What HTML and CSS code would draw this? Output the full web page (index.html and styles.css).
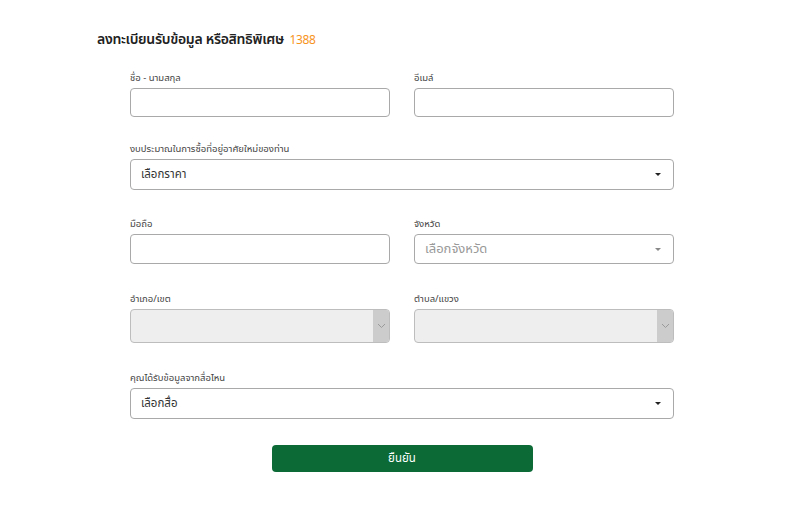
FILE: index.html
```html
<!DOCTYPE html>
<html lang="th">
<head>
<meta charset="utf-8">
<title>ลงทะเบียนรับข้อมูล</title>
<link rel="stylesheet" href="styles.css">
</head>
<body>
<div class="page">
  <h1 class="title">ลงทะเบียนรับข้อมูล หรือสิทธิพิเศษ <span class="hot">1388</span></h1>
  <form class="form">
    <div class="row two r1">
      <div class="field">
        <label class="lbl">ชื่อ - นามสกุล</label>
        <div class="ctl h29"></div>
      </div>
      <div class="field">
        <label class="lbl">อีเมล์</label>
        <div class="ctl h29"></div>
      </div>
    </div>
    <div class="row r2">
      <div class="field">
        <label class="lbl">งบประมาณในการซื้อที่อยู่อาศัยใหม่ของท่าน</label>
        <div class="ctl sel h31"><span class="val">เลือกราคา</span><span class="caret"></span></div>
      </div>
    </div>
    <div class="row two r3">
      <div class="field">
        <label class="lbl">มือถือ</label>
        <div class="ctl h30"></div>
      </div>
      <div class="field">
        <label class="lbl">จังหวัด</label>
        <div class="ctl sel h30"><span class="val ph">เลือกจังหวัด</span><span class="caret light"></span></div>
      </div>
    </div>
    <div class="row two r4">
      <div class="field">
        <label class="lbl">อำเภอ/เขต</label>
        <div class="ctl dis h34"><span class="addon"><svg width="9" height="6" viewBox="0 0 9 6"><path d="M1 1l3.5 3.5L8 1" fill="none" stroke="#9a9a9a" stroke-width="1"/></svg></span></div>
      </div>
      <div class="field">
        <label class="lbl">ตำบล/แขวง</label>
        <div class="ctl dis h34"><span class="addon"><svg width="9" height="6" viewBox="0 0 9 6"><path d="M1 1l3.5 3.5L8 1" fill="none" stroke="#9a9a9a" stroke-width="1"/></svg></span></div>
      </div>
    </div>
    <div class="row r5">
      <div class="field">
        <label class="lbl">คุณได้รับข้อมูลจากสื่อไหน</label>
        <div class="ctl sel h31"><span class="val">เลือกสื่อ</span><span class="caret"></span></div>
      </div>
    </div>
    <div class="actions">
      <button type="button" class="btn">ยืนยัน</button>
    </div>
  </form>
</div>
</body>
</html>
```

FILE: styles.css
```css
* { box-sizing: border-box; }
html, body { margin: 0; padding: 0; background: #fff; }
body {
  font-family: "Noto Sans Thai", "Noto Sans", "DejaVu Sans", sans-serif;
  color: #333;
}
.page {
  width: 800px;
  height: 507px;
  padding: 29px 0 0 97px;
}
.title {
  margin: 0;
  font-size: 14px;
  line-height: 22px;
  font-weight: 600;
  color: #222;
  letter-spacing: -0.3px;
}
.hot {
  color: #f7941d;
  font-size: 12px;
  font-weight: 400;
  margin-left: 2px;
}
.form {
  width: 544px;
  margin: 20px 0 0 33px;
}
.row { display: grid; grid-template-columns: 1fr; }
.row.two { grid-template-columns: 260px 260px; column-gap: 24px; }
.r2 { margin-top: 25px; }
.r3 { margin-top: 27px; }
.r4 { margin-top: 28px; }
.r5 { margin-top: 28px; }
.field { display: flex; flex-direction: column; }
.lbl {
  font-size: 9.5px;
  line-height: 14px;
  height: 14px;
  margin-bottom: 3px;
  color: #444;
  white-space: nowrap;
}
.ctl {
  border: 1px solid #a9a9a9;
  border-radius: 4px;
  background: #fff;
  display: flex;
  align-items: center;
  position: relative;
}
.h29 { height: 29px; }
.h30 { height: 30px; }
.h31 { height: 31px; }
.h34 { height: 34px; }
.sel { padding: 0 12px 0 10px; justify-content: space-between; }
.val { font-size: 11.5px; color: #333; }
.val.ph { font-size: 13px; color: #999; }
.caret {
  width: 0; height: 0;
  border-left: 3px solid transparent;
  border-right: 3px solid transparent;
  border-top: 3px solid #222;
}
.caret.light { border-top-color: #888; }
.dis {
  background: #eeeeee;
  border-color: #bdbdbd;
  justify-content: flex-end;
  overflow: hidden;
}
.addon {
  width: 16px;
  height: 100%;
  background: #cccccc;
  display: flex;
  align-items: center;
  justify-content: center;
}
.actions { display: flex; justify-content: center; margin-top: 26px; }
.btn {
  width: 261px;
  height: 27px;
  border: 0;
  border-radius: 4px;
  background: #0b6a36;
  color: #fff;
  font-family: inherit;
  font-size: 11.5px;
  padding: 0;
}
```
